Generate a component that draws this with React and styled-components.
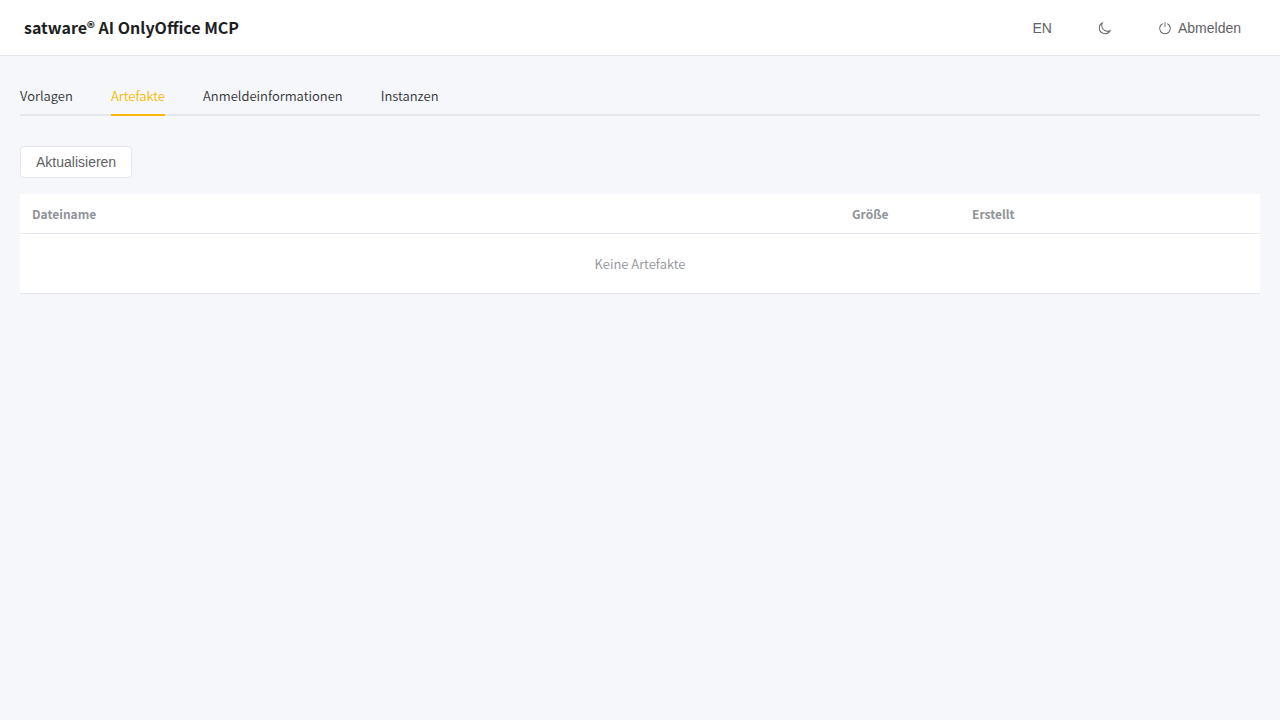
import React, { useState } from 'react'
import styled, { createGlobalStyle } from 'styled-components'

const tabs = ['Vorlagen', 'Artefakte', 'Anmeldeinformationen', 'Instanzen']

const MoonIcon = () => (
  <Icon viewBox='0 0 1024 1024' aria-hidden='true'>
    <path d='M240.448 240.448a384 384 0 1 0 559.424 525.696 448 448 0 0 1-542.016-542.08 391 391 0 0 0-17.408 16.384m181.056 362.048a384 384 0 0 0 525.632 16.384A448 448 0 1 1 405.056 76.8a384 384 0 0 0 16.448 525.696' />
  </Icon>
)

const PowerIcon = () => (
  <Icon viewBox='0 0 1024 1024' aria-hidden='true'>
    <path d='M352 159.872V230.4a352 352 0 1 0 320 0v-70.528A416.128 416.128 0 0 1 512 960a416 416 0 0 1-160-800.128z' />
    <path d='M512 64q32 0 32 32v320q0 32-32 32t-32-32V96q0-32 32-32' />
  </Icon>
)

const App = () => {
  const [active, setActive] = useState('Artefakte')

  return (
    <>
      <GlobalStyle />
      <Header>
        <h1>satware® AI OnlyOffice MCP</h1>
        <Actions>
          <Button type='button' $text>
            EN
          </Button>
          <Button type='button' $text aria-label='Dunkles Design'>
            <MoonIcon />
          </Button>
          <Button type='button' $text>
            <PowerIcon />
            Abmelden
          </Button>
        </Actions>
      </Header>

      <Main>
        <TabList role='tablist'>
          {tabs.map(tab => (
            <Tab
              key={tab}
              type='button'
              role='tab'
              aria-selected={tab === active}
              $active={tab === active}
              onClick={() => setActive(tab)}
            >
              {tab}
            </Tab>
          ))}
        </TabList>

        <Toolbar>
          <Button type='button'>Aktualisieren</Button>
        </Toolbar>

        <Table>
          <colgroup>
            <col />
            <Col $width={120} />
            <Col $width={180} />
            <Col $width={120} />
          </colgroup>
          <thead>
            <tr>
              <th>Dateiname</th>
              <th>Größe</th>
              <th>Erstellt</th>
              <th />
            </tr>
          </thead>
          <tbody>
            <tr>
              <EmptyCell colSpan={4}>Keine Artefakte</EmptyCell>
            </tr>
          </tbody>
        </Table>
      </Main>
    </>
  )
}

export default App

const GlobalStyle = createGlobalStyle`
  * {
    box-sizing: border-box;
  }
  body {
    margin: 0;
    background-color: #f5f7fb;
    color: #303133;
    font-family: 'Noto Sans CJK SC', sans-serif;
    font-size: 13px;
    font-weight: 350;
  }
`

const Header = styled.header`
  display: flex;
  align-items: center;
  justify-content: space-between;
  height: 56px;
  padding: 0 24px;
  background-color: #fff;
  border-bottom: 1px solid #e4e7ed;

  h1 {
    margin: 0;
    padding-bottom: 2px;
    color: #1d1e1f;
    font-size: 16px;
    font-weight: 600;
    line-height: 24px;
  }
`

const Actions = styled.div`
  display: flex;
  align-items: center;
  gap: 16px;
`

const Button = styled.button`
  display: inline-flex;
  align-items: center;
  justify-content: center;
  gap: 6px;
  height: 32px;
  padding: 0 15px;
  border: ${props => (props.$text ? '0' : '1px solid #e4e7ed')};
  border-radius: 4px;
  background-color: ${props => (props.$text ? 'transparent' : '#fff')};
  color: #606266;
  font-family: 'Liberation Sans', Arial, sans-serif;
  font-size: 14px;
  font-weight: 400;
  line-height: 14px;
  cursor: pointer;
`

const Icon = styled.svg`
  width: 14px;
  height: 14px;
  fill: currentColor;
`

const Main = styled.main`
  padding: 20px;
`

const TabList = styled.div`
  display: flex;
  gap: 38px;
  height: 40px;
  box-shadow: inset 0 -2px #e4e7ed;
`

const Tab = styled.button`
  padding: 2px 0 0;
  border: 0;
  border-bottom: 2px solid ${props => (props.$active ? '#fab900' : 'transparent')};
  background: none;
  color: ${props => (props.$active ? '#fab900' : '#303133')};
  font-family: inherit;
  font-size: 13px;
  font-weight: 350;
  line-height: 36px;
  cursor: pointer;
`

const Toolbar = styled.div`
  display: flex;
  padding: 30px 0 16px;
`

const Table = styled.table`
  width: 100%;
  table-layout: fixed;
  border-collapse: separate;
  border-spacing: 0;
  background-color: #fff;
  color: #909399;
  line-height: 23px;

  th,
  td {
    padding: 8px 12px;
    border-bottom: 1px solid #e4e7ed;
    text-align: left;
  }
  th {
    font-size: 12px;
    font-weight: 600;
  }
`

const Col = styled.col`
  width: ${props => props.$width}px;
`

const EmptyCell = styled.td`
  && {
    height: 60px;
    padding: 0;
    text-align: center;
  }
`
